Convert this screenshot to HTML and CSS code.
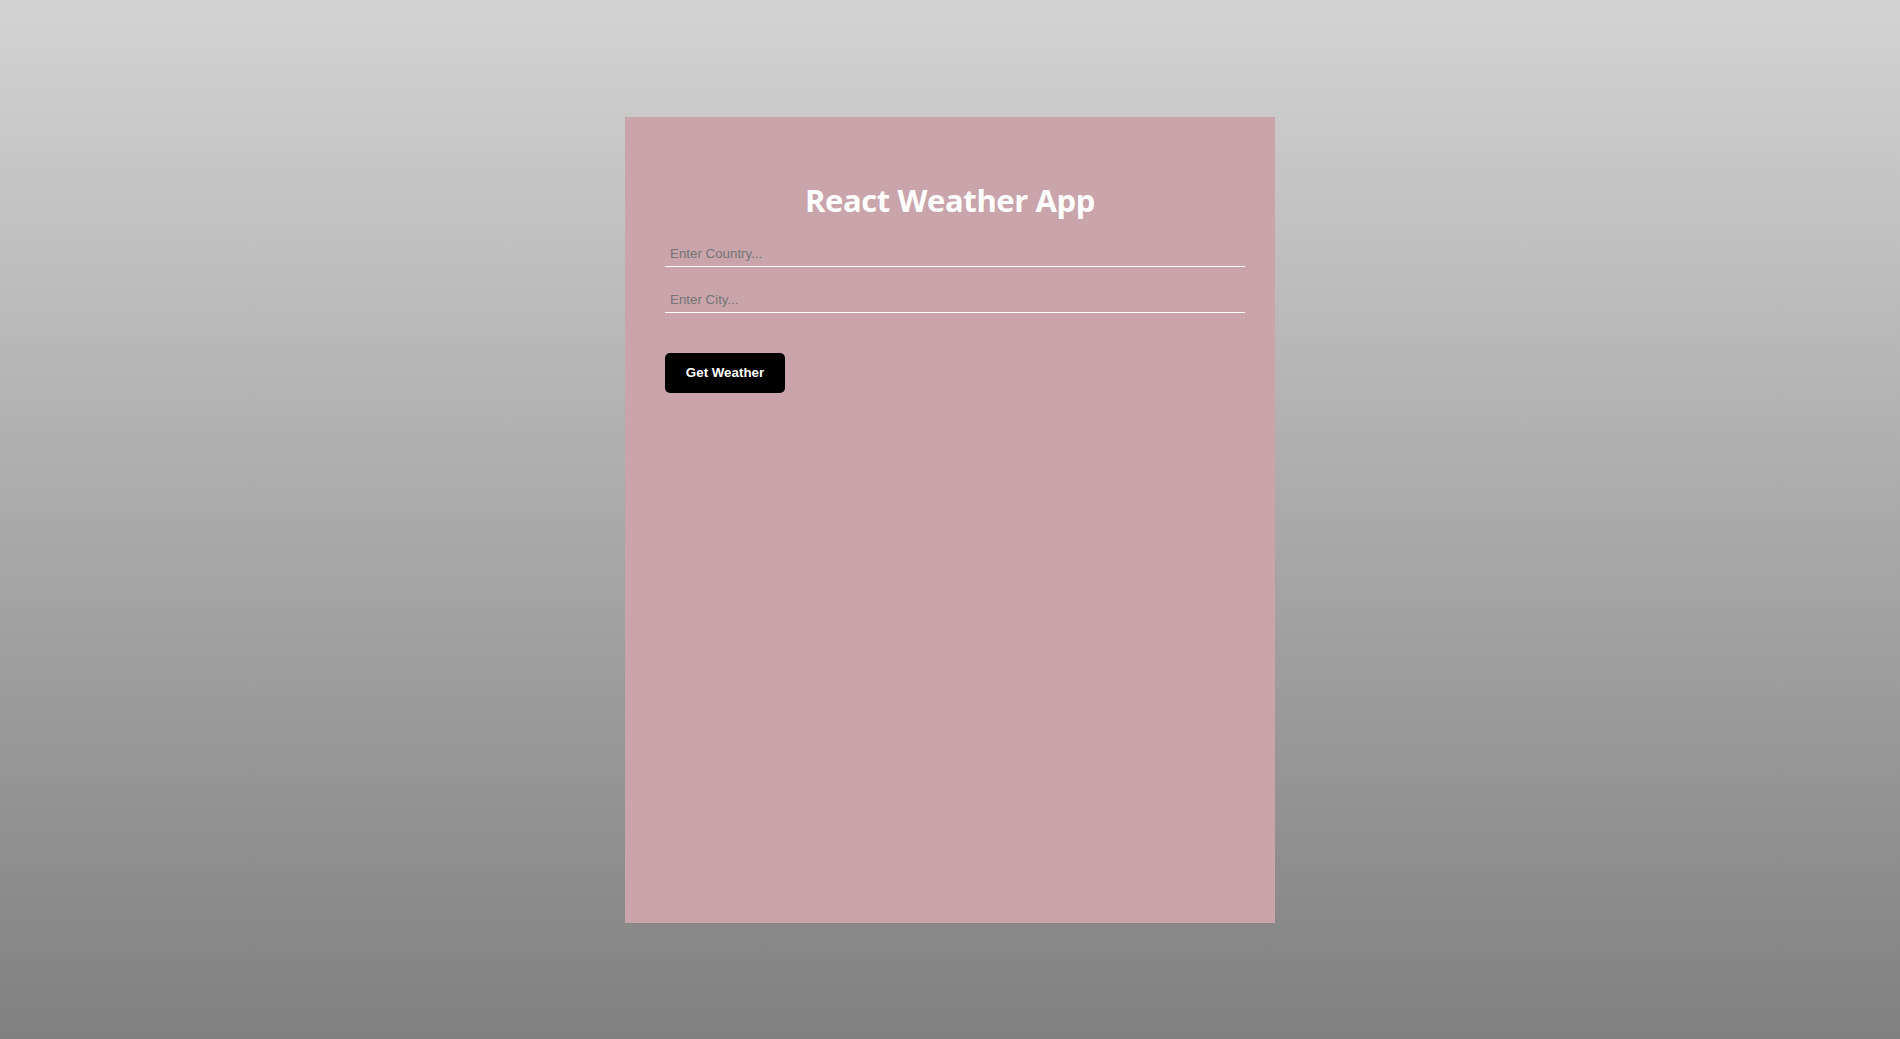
FILE: index.html
```html
<!DOCTYPE html>
<html lang="en">
<head>
<meta charset="utf-8">
<title>React Weather App</title>
<link rel="stylesheet" href="styles.css">
</head>
<body>
  <main class="card">
    <h1 class="title">React Weather App</h1>
    <form class="form">
      <input class="field" type="text" placeholder="Enter Country...">
      <input class="field" type="text" placeholder="Enter City...">
      <button class="btn" type="button">Get Weather</button>
    </form>
  </main>
</body>
</html>
```

FILE: styles.css
```css
html, body {
  margin: 0;
  padding: 0;
  height: 100%;
}

body {
  background: linear-gradient(to bottom, #d3d3d3, #808080);
  display: flex;
  align-items: center;
  justify-content: center;
  font-family: "Liberation Sans", Arial, sans-serif;
}

.card {
  width: 650px;
  height: 806px;
  box-sizing: border-box;
  background: #caa4ab;
  padding: 63px 30px 0 40px;
  display: flex;
  flex-direction: column;
}

.title {
  margin: 0 0 0 -10px;
  font-family: "Open Sans", "Noto Sans", sans-serif;
  font-weight: 700;
  font-size: 31px;
  line-height: 40px;
  color: #ffffff;
  text-align: center;
  letter-spacing: -0.4px;
}

.form {
  display: flex;
  flex-direction: column;
  align-items: flex-start;
  margin-top: 17px;
}

.field {
  width: 580px;
  height: 30px;
  box-sizing: border-box;
  padding: 5px 5px 0;
  margin: 0 0 16px;
  border: none;
  border-bottom: 1px solid #ffffff;
  background: transparent;
  font-family: "Liberation Sans", Arial, sans-serif;
  font-size: 13.333px;
  color: #333;
  outline: none;
}

.field::placeholder {
  color: #757575;
}

.btn {
  margin-top: 24px;
  width: 120px;
  height: 40px;
  border: none;
  border-radius: 5px;
  background: #000000;
  color: #ffffff;
  font-family: "Liberation Sans", Arial, sans-serif;
  font-weight: 700;
  font-size: 13.333px;
  cursor: pointer;
}
```
